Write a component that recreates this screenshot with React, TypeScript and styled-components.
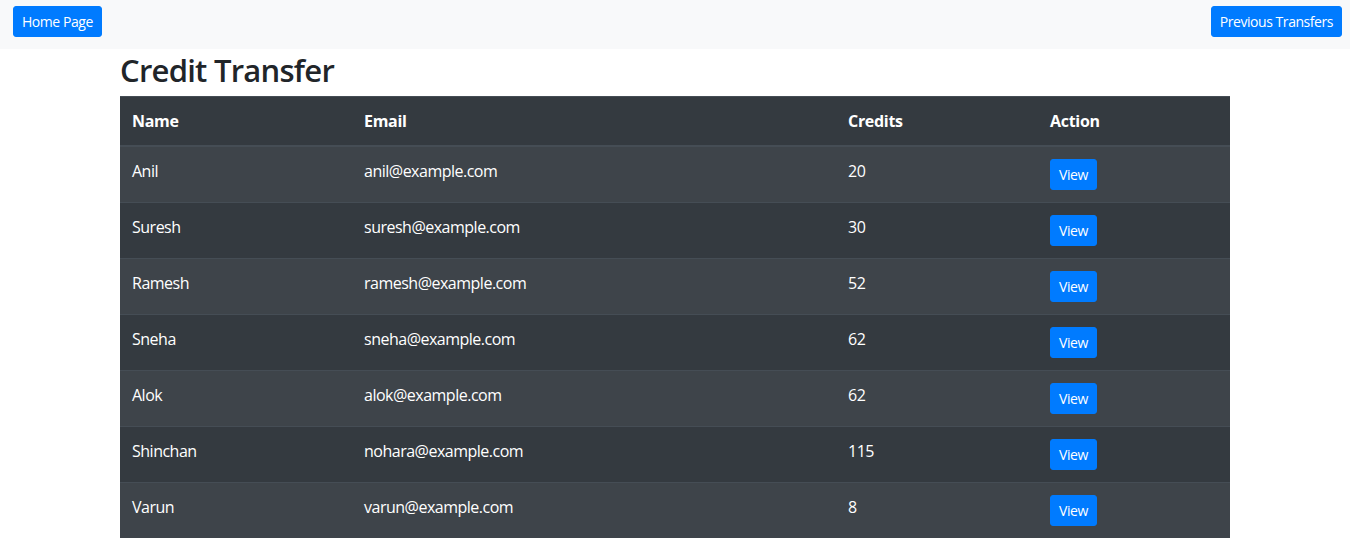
import React from "react";
import styled, { createGlobalStyle } from "styled-components";

const Global = createGlobalStyle`
  * { box-sizing: border-box; }
  body {
    margin: 0;
    font-family: "Open Sans", "Noto Sans", sans-serif;
    font-size: 16px;
    line-height: 1.5;
    color: #212529;
    background: #fff;
  }
`;

const NavBar = styled.nav`
  display: flex;
  justify-content: space-between;
  align-items: flex-start;
  height: 49px;
  padding: 6px 8px 0 13px;
  background: #f8f9fa;
`;

const Button = styled.button`
  font-family: inherit;
  font-size: 14px;
  line-height: 21px;
  padding: 4px 8px;
  color: #fff;
  background: #007bff;
  border: 1px solid #007bff;
  border-radius: 3px;
  cursor: pointer;
  letter-spacing: -0.45px;
`;

const Container = styled.main`
  width: 1110px;
  margin: 0 auto;
`;

const Title = styled.h2`
  margin: 0 0 6px;
  padding-top: 2px;
  font-size: 31px;
  font-weight: 600;
  line-height: 39px;
  color: #212529;
  letter-spacing: -0.75px;
`;

const Table = styled.table`
  width: 100%;
  border-collapse: collapse;
  background: #343a40;
  color: #fff;
`;

const Th = styled.th<{ $w: number }>`
  width: ${(p) => p.$w}px;
  text-align: left;
  padding: 12px;
  font-weight: 700;
  vertical-align: bottom;
  border-top: 1px solid #454d55;
  border-bottom: 2px solid #454d55;
  letter-spacing: -0.3px;
`;

const Row = styled.tr<{ $odd: boolean }>`
  background: ${(p) => (p.$odd ? "#3e444a" : "#343a40")};
`;

const Td = styled.td`
  padding: 12px;
  vertical-align: top;
  border-top: 1px solid #454d55;
  letter-spacing: -0.5px;
`;

const users = [
  ["Anil", "anil@example.com", "20"],
  ["Suresh", "suresh@example.com", "30"],
  ["Ramesh", "ramesh@example.com", "52"],
  ["Sneha", "sneha@example.com", "62"],
  ["Alok", "alok@example.com", "62"],
  ["Shinchan", "nohara@example.com", "115"],
  ["Varun", "varun@example.com", "8"],
];

export default function App() {
  return (
    <>
      <Global />
      <NavBar>
        <Button>Home Page</Button>
        <Button>Previous Transfers</Button>
      </NavBar>
      <Container>
        <Title>Credit Transfer</Title>
        <Table>
          <thead>
            <tr>
              <Th $w={232}>Name</Th>
              <Th $w={484}>Email</Th>
              <Th $w={202}>Credits</Th>
              <Th $w={192}>Action</Th>
            </tr>
          </thead>
          <tbody>
            {users.map(([n, e, c], i) => (
              <Row key={n} $odd={i % 2 === 0}>
                <Td>{n}</Td>
                <Td>{e}</Td>
                <Td>{c}</Td>
                <Td>
                  <Button>View</Button>
                </Td>
              </Row>
            ))}
          </tbody>
        </Table>
      </Container>
    </>
  );
}
